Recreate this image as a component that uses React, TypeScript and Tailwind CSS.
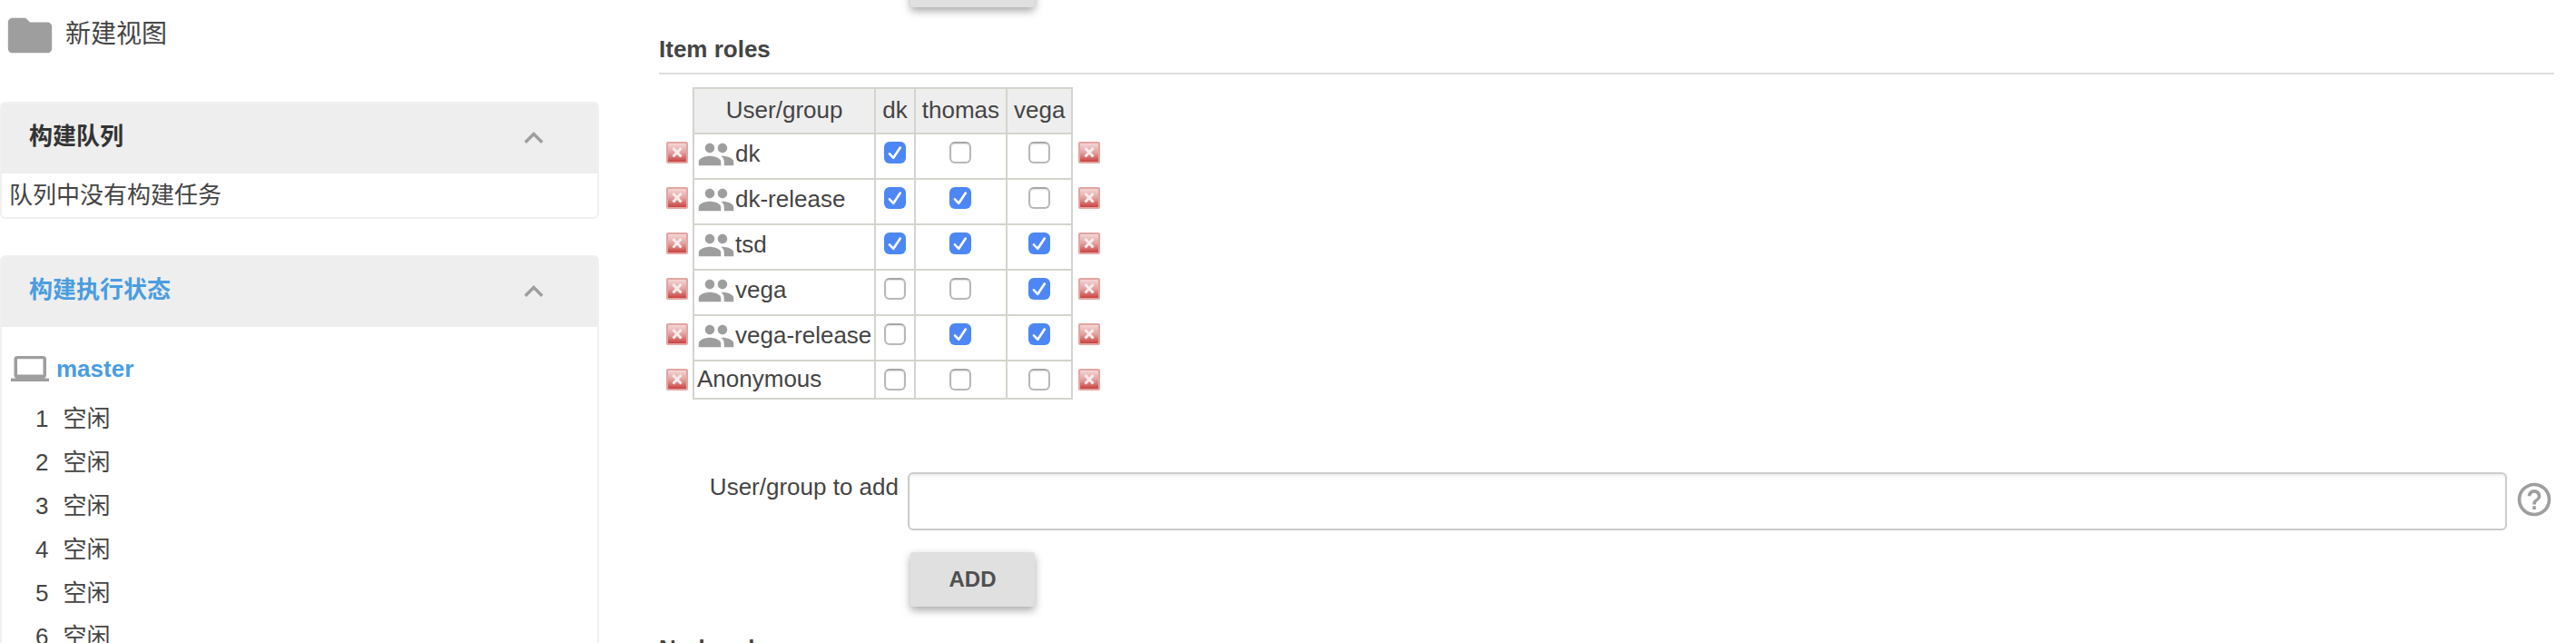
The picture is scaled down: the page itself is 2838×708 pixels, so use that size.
import React, { useState } from "react";
import { MdFolder, MdPeople, MdHelpOutline, MdKeyboardArrowUp } from "react-icons/md";

const ROLES = ["dk", "thomas", "vega"];

const ROWS = [
  { name: "dk", group: true, roles: ["dk"] },
  { name: "dk-release", group: true, roles: ["dk", "thomas"] },
  { name: "tsd", group: true, roles: ["dk", "thomas", "vega"] },
  { name: "vega", group: true, roles: ["vega"] },
  { name: "vega-release", group: true, roles: ["thomas", "vega"] },
  { name: "Anonymous", group: false, roles: [] as string[] },
];

const EXECUTORS = [1, 2, 3, 4, 5, 6];

function LaptopIcon() {
  return (
    <svg viewBox="0 0 42 28" className="h-7 w-[42px] shrink-0" aria-hidden="true">
      <path
        fill="#9e9e9e"
        fillRule="evenodd"
        d="M7 0h28.500a3.500 3.500 0 0 1 3.500 3.500V21a3.500 3.500 0 0 1-3.500 3.500H42V28H0v-3.500h7A3.500 3.500 0 0 1 3.500 21V3.500A3.500 3.500 0 0 1 7 0zM7 3.200V20.500h28.500V3.200z"
      />
    </svg>
  );
}

function DeleteIcon() {
  return (
    <svg viewBox="0 0 24 24" className="size-6" aria-hidden="true">
      <defs>
        <linearGradient id="delete-face" x1="0" y1="0" x2="0" y2="1">
          <stop offset="0" stopColor="#f3d6d4" />
          <stop offset="0.5" stopColor="#e3a19f" />
          <stop offset="1" stopColor="#c9423f" />
        </linearGradient>
      </defs>
      <rect x="0" y="0" width="24" height="24" rx="2" fill="#e2a5a2" />
      <rect x="2" y="2" width="20" height="20" rx="1" fill="url(#delete-face)" />
      <path d="M7.500 7l9 9.500M16.500 7l-9 9.500" stroke="#f8ecec" strokeWidth="3" />
    </svg>
  );
}

function DeleteButton({ name }: { name: string }) {
  return (
    <button type="button" aria-label={`Delete ${name}`} className="block size-6">
      <DeleteIcon />
    </button>
  );
}

function RoleCheckbox({ label, initial }: { label: string; initial: boolean }) {
  const [checked, setChecked] = useState(initial);
  return (
    <span className="relative mx-auto block size-6">
      <input
        type="checkbox"
        aria-label={label}
        checked={checked}
        onChange={(e) => setChecked(e.target.checked)}
        className="peer block size-6 appearance-none rounded-md border-2 border-[#b8b8b8] border-t-[#a6a6a6] bg-white shadow-[inset_0_1px_2px_#e4e4e4] checked:border-0 checked:bg-[#4c87f5] checked:shadow-none"
      />
      <svg
        viewBox="0 0 24 24"
        className="pointer-events-none absolute inset-0 hidden size-6 peer-checked:block"
        aria-hidden="true"
      >
        <path
          d="M6 13.300l4.300 4.500L17.800 6.500"
          fill="none"
          stroke="#fff"
          strokeWidth="2.600"
          strokeLinecap="round"
          strokeLinejoin="round"
        />
      </svg>
    </span>
  );
}

function Panel({
  title,
  titleClass,
  children,
}: {
  title: string;
  titleClass: string;
  children: React.ReactNode;
}) {
  return (
    <section className="rounded-md border-2 border-[#f0f0f0]">
      <header className="flex h-[77px] items-center justify-between bg-[#eeeeee] pr-[49px] pb-[2px] pl-[30px]">
        <h2 className={titleClass}>{title}</h2>
        <button type="button" aria-label={`收起${title}`}>
          <MdKeyboardArrowUp className="size-[42px] text-[#9e9e9e]" />
        </button>
      </header>
      {children}
    </section>
  );
}

function AddButton() {
  return (
    <button
      type="button"
      className="h-15 w-[137px] rounded-[3px] bg-[#e0e0e0] text-2xl font-bold text-[#4f4f4f] shadow-[0_4px_10px_rgba(0,0,0,0.35)]"
    >
      ADD
    </button>
  );
}

function Sidebar() {
  return (
    <aside className="w-[660px] shrink-0">
      <a href="#new-view" className="mt-[10px] flex h-[58px] items-center gap-[10px] pl-1 text-[28px]">
        <MdFolder className="size-[58px] text-[#9e9e9e]" />
        <span className="pb-[2px]">新建视图</span>
      </a>
      <div className="mt-11 flex flex-col gap-10">
        <Panel title="构建队列" titleClass="pb-1 font-bold text-[#333333]">
          <p className="flex h-12 items-center pl-2">队列中没有构建任务</p>
        </Panel>
        <Panel title="构建执行状态" titleClass="pb-1 font-bold text-[#4a9de0]">
          <a
            href="#master"
            className="mt-7 flex h-9 items-center gap-2 pl-[10px] font-bold text-[#4a9de0]"
          >
            <LaptopIcon />
            master
          </a>
          <ol className="mt-[13px]">
            {EXECUTORS.map((n) => (
              <li key={n} className="flex h-12 items-center gap-4 pl-[37px]">
                <span>{n}</span>
                <span>空闲</span>
              </li>
            ))}
          </ol>
        </Panel>
      </div>
    </aside>
  );
}

function SectionTitle({ children }: { children: React.ReactNode }) {
  return (
    <h2 className="mt-[30px] border-b-2 border-[#dddddd] pb-[10px] leading-8 font-bold">
      {children}
    </h2>
  );
}

function RolesTable() {
  return (
    <table className="mt-[14px] ml-1 border-collapse">
      <thead>
        <tr className="h-[50px]">
          <td />
          <th className="border-2 border-[#d3d5cd] bg-[#eeeeee] px-[3px] pb-[2px] font-normal">
            User/group
          </th>
          {ROLES.map((r) => (
            <th
              key={r}
              className="border-2 border-[#d3d5cd] bg-[#eeeeee] px-[7px] pb-[2px] font-normal"
            >
              {r}
            </th>
          ))}
          <td />
        </tr>
      </thead>
      <tbody>
        {ROWS.map((row) => (
          <tr key={row.name} className={row.group ? "h-[50px] align-top" : "h-[42px] align-top"}>
            <td className="pt-[9px] pr-[5px] pl-1">
              <DeleteButton name={row.name} />
            </td>
            <td className="border-2 border-[#d3d5cd] px-[3px]">
              {row.group ? (
                <span className="flex items-start pt-[1px]">
                  <MdPeople className="size-[42px] shrink-0 text-[#9e9e9e]" />
                  <span className="pt-1">{row.name}</span>
                </span>
              ) : (
                <span className="block pt-[3px]">{row.name}</span>
              )}
            </td>
            {ROLES.map((r) => (
              <td key={r} className="border-2 border-[#d3d5cd] pt-2">
                <RoleCheckbox label={`${row.name} ${r}`} initial={row.roles.includes(r)} />
              </td>
            ))}
            <td className="px-[6px] pt-[9px]">
              <DeleteButton name={row.name} />
            </td>
          </tr>
        ))}
      </tbody>
    </table>
  );
}

export default function App() {
  return (
    <div className="flex h-screen gap-[66px] overflow-hidden bg-white pr-6 font-['Liberation_Sans','Noto_Sans_CJK_SC',sans-serif] text-[26px] leading-8 text-[#444444]">
      <Sidebar />
      <main className="min-w-0 flex-1">
        <div className="-mt-[52px] flex pl-[277px]">
          <AddButton />
        </div>
        <SectionTitle>Item roles</SectionTitle>
        <RolesTable />
        <div className="mt-20 flex items-start">
          <label htmlFor="add-user" className="w-[264px] shrink-0 text-right">
            User/group to add
          </label>
          <input
            id="add-user"
            type="text"
            className="ml-[10px] h-16 min-w-0 flex-1 rounded-md border-2 border-[#cccccc] bg-white px-3 shadow-[inset_0_2px_3px_#eeeeee]"
          />
          <button type="button" aria-label="Help" className="mt-2 ml-2">
            <MdHelpOutline className="size-11 text-[#9e9e9e]" />
          </button>
        </div>
        <div className="mt-6 flex pl-[277px]">
          <AddButton />
        </div>
        <SectionTitle>Node roles</SectionTitle>
      </main>
    </div>
  );
}
